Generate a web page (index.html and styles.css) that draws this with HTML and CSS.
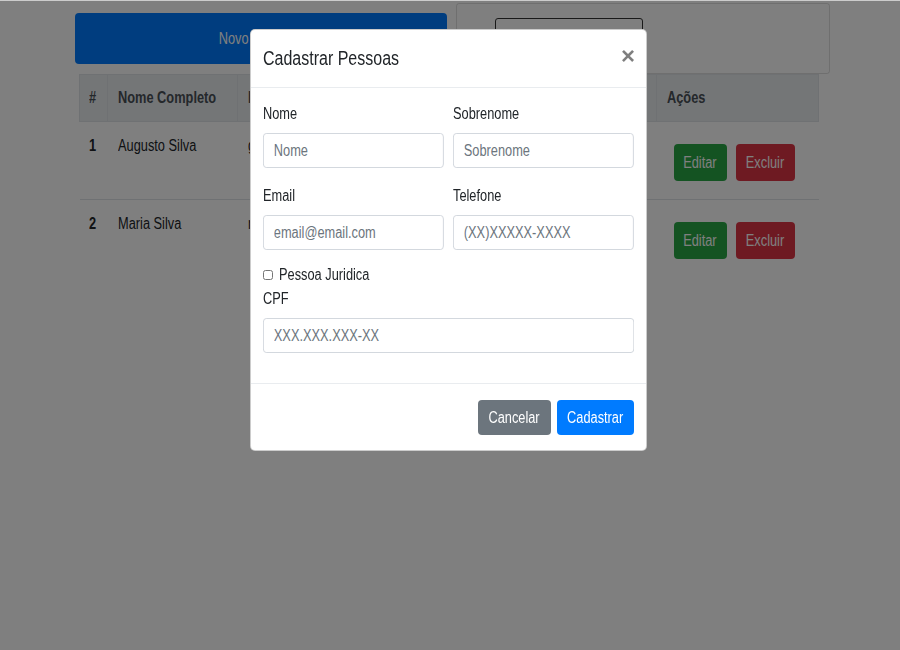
FILE: index.html
```html
<!DOCTYPE html>
<html lang="pt-BR">
<head>
<meta charset="utf-8">
<title>Cadastro de Pessoas</title>
<link rel="stylesheet" href="styles.css">
</head>
<body>
<div class="page">
  <div class="container">
    <div class="toprow">
      <button class="btn-new"><span class="sx sx-c">Novo Cadastro</span></button>
      <div class="card">
        <div class="search-box"></div>
      </div>
    </div>
    <table class="people">
      <colgroup>
        <col class="c-id"><col class="c-name"><col class="c-email"><col class="c-phone"><col class="c-doc"><col class="c-act">
      </colgroup>
      <thead>
        <tr>
          <th><span class="sx">#</span></th>
          <th><span class="sx">Nome Completo</span></th>
          <th><span class="sx">Email</span></th>
          <th><span class="sx">Telefone</span></th>
          <th><span class="sx">CPF</span></th>
          <th><span class="sx">Ações</span></th>
        </tr>
      </thead>
      <tbody>
        <tr>
          <td class="num"><span class="sx">1</span></td>
          <td><span class="sx">Augusto Silva</span></td>
          <td><span class="sx">guto@email.com</span></td>
          <td><span class="sx">(11)99999-9999</span></td>
          <td><span class="sx">123.456.789-00</span></td>
          <td class="actions">
            <button class="btn btn-green btn-edit"><span class="sx sx-c">Editar</span></button>
            <button class="btn btn-red btn-del"><span class="sx sx-c">Excluir</span></button>
          </td>
        </tr>
        <tr>
          <td class="num"><span class="sx">2</span></td>
          <td><span class="sx">Maria Silva</span></td>
          <td><span class="sx">maria@email.com</span></td>
          <td><span class="sx">(11)98888-8888</span></td>
          <td><span class="sx">987.654.321-00</span></td>
          <td class="actions">
            <button class="btn btn-green btn-edit"><span class="sx sx-c">Editar</span></button>
            <button class="btn btn-red btn-del"><span class="sx sx-c">Excluir</span></button>
          </td>
        </tr>
      </tbody>
    </table>
  </div>
</div>

<div class="backdrop"></div>

<div class="modal">
  <div class="modal-header">
    <h5 class="modal-title"><span class="sx">Cadastrar Pessoas</span></h5>
    <span class="close">&times;</span>
  </div>
  <div class="modal-body">
    <div class="form-row">
      <div class="group">
        <label class="lbl"><span class="sx">Nome</span></label>
        <input class="field" type="text" placeholder="Nome">
      </div>
      <div class="group">
        <label class="lbl"><span class="sx">Sobrenome</span></label>
        <input class="field" type="text" placeholder="Sobrenome">
      </div>
    </div>
    <div class="form-row row-email">
      <div class="group">
        <label class="lbl"><span class="sx">Email</span></label>
        <input class="field" type="text" placeholder="email@email.com">
      </div>
      <div class="group">
        <label class="lbl"><span class="sx">Telefone</span></label>
        <input class="field" type="text" placeholder="(XX)XXXXX-XXXX">
      </div>
    </div>
    <div class="check">
      <input type="checkbox" class="check-box">
      <span class="sx">Pessoa Juridica</span>
    </div>
    <div class="group last">
      <label class="lbl"><span class="sx">CPF</span></label>
      <input class="field" type="text" placeholder="XXX.XXX.XXX-XX">
    </div>
  </div>
  <div class="modal-footer">
    <button class="btn btn-gray"><span class="sx sx-c">Cancelar</span></button>
    <button class="btn btn-blue"><span class="sx sx-c">Cadastrar</span></button>
  </div>
</div>
</body>
</html>
```
FILE: styles.css
```css
* { box-sizing: border-box; }

html, body {
  margin: 0;
  padding: 0;
  background: #fff;
  font-family: "Liberation Sans", Arial, sans-serif;
  font-size: 16px;
  color: #212529;
}

/* narrow rendering of the Arial-metric face */
.sx {
  display: inline-block;
  white-space: nowrap;
  transform: scaleX(0.8);
  transform-origin: 0 50%;
}

.sx-c {
  transform-origin: 50% 50%;
}

.page {
  padding-top: 3px;
}

.container {
  width: 755px;
  margin-left: 75px;
}

.toprow {
  display: flex;
  gap: 9px;
  align-items: flex-start;
}

.btn-new {
  width: 372px;
  height: 51px;
  margin-top: 10px;
  padding: 0;
  background: #007bff;
  color: #fff;
  border: none;
  border-radius: 4px;
  font-family: inherit;
  font-size: 16px;
}

.card {
  flex: 1;
  height: 71px;
  border: 1px solid rgba(0, 0, 0, 0.13);
  border-radius: 3px;
  padding: 14px 0 0 38px;
}

.search-box {
  width: 148px;
  height: 40px;
  border: 1px solid #333;
  border-radius: 3px;
}

.people {
  width: 739px;
  margin-left: 4px;
  border-collapse: collapse;
  table-layout: fixed;
}

.c-id { width: 28px; }
.c-name { width: 130px; }
.c-email { width: 183px; }
.c-phone { width: 120px; }
.c-doc { width: 116px; }
.c-act { width: 162px; }

.people th {
  height: 47px;
  background: #e9ecef;
  border: 1px solid #dee2e6;
  padding: 0 10px;
  text-align: left;
  font-weight: bold;
  color: #495057;
  vertical-align: middle;
  white-space: nowrap;
  overflow: hidden;
}

.people th:first-child {
  padding-left: 9px;
}

.people td {
  height: 78px;
  padding: 12px 10px;
  vertical-align: top;
  border-top: 1px solid #dee2e6;
  line-height: 24px;
  white-space: nowrap;
  overflow: hidden;
}

.people td.num {
  font-weight: bold;
  padding-left: 9px;
}

.people td.actions {
  vertical-align: middle;
  padding: 4px 0 0 17px;
}

.btn {
  height: 37px;
  padding: 0;
  border: 1px solid transparent;
  border-radius: 4px;
  color: #fff;
  font-family: inherit;
  font-size: 16px;
  line-height: 1;
  text-align: center;
}

.actions .btn + .btn { margin-left: 5px; }

.btn-edit { width: 53px; }
.btn-del { width: 59px; }

.btn-green { background: #28a745; }
.btn-red { background: #dc3545; }
.btn-gray { background: #6c757d; height: 35px; width: 73px; }
.btn-blue { background: #007bff; height: 35px; width: 77px; }

.backdrop {
  position: fixed;
  inset: 0;
  background: rgba(0, 0, 0, 0.5);
  border-top: 1px solid rgba(255, 255, 255, 0.6);
}

.modal {
  position: absolute;
  left: 250px;
  top: 29px;
  width: 397px;
  background: #fff;
  border: 1px solid rgba(0, 0, 0, 0.2);
  border-radius: 5px;
}

.modal-header {
  display: flex;
  justify-content: space-between;
  align-items: center;
  padding: 14px 12px 15px 12px;
  border-bottom: 1px solid #e9ecef;
}

.modal-title {
  margin: 0;
  font-size: 20px;
  line-height: 28px;
  font-weight: normal;
}

.close {
  font-size: 24px;
  font-weight: bold;
  line-height: 24px;
  color: #000;
  opacity: 0.5;
  margin-top: -4px;
  margin-right: -1px;
}

.modal-body {
  padding: 13px 12px 15px 12px;
}

.form-row {
  display: grid;
  grid-template-columns: minmax(0, 1fr) minmax(0, 1fr);
  gap: 9px;
}

.group {
  margin-bottom: 15px;
}

.row-email .group {
  margin-bottom: 14px;
}

.lbl {
  display: block;
  line-height: 24px;
  margin-bottom: 8px;
}

.lbl .sx {
  position: relative;
  top: 1px;
}

.field {
  display: block;
  width: 125%;
  height: 35px;
  padding: 0 12.5px;
  border: 1px solid #ced4da;
  border-radius: 4px;
  font-family: inherit;
  font-size: 16px;
  color: #495057;
  transform: scaleX(0.8);
  transform-origin: 0 0;
}

.field::placeholder {
  color: #6c757d;
}

.check {
  display: flex;
  align-items: center;
  height: 22px;
  gap: 6px;
}

.check-box {
  width: 10px;
  height: 10px;
  margin: 0;
}

.modal-footer {
  display: flex;
  justify-content: flex-end;
  gap: 6px;
  padding: 16px 12px 15px;
  border-top: 1px solid #e9ecef;
}
```
